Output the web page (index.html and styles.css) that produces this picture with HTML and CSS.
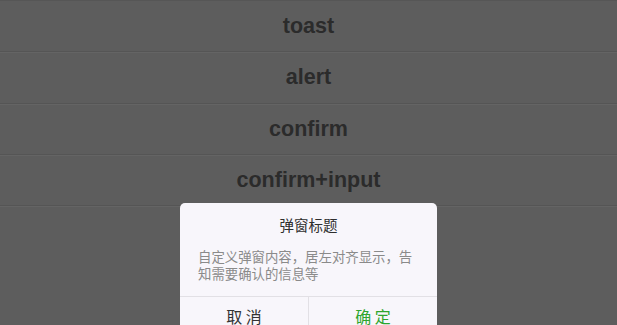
FILE: index.html
```html
<!DOCTYPE html>
<html lang="zh">
<head>
<meta charset="utf-8">
<title>Dialog demo</title>
<link rel="stylesheet" href="styles.css">
</head>
<body>
<ul class="menu">
  <li class="menu-item">toast</li>
  <li class="menu-item">alert</li>
  <li class="menu-item">confirm</li>
  <li class="menu-item">confirm+input</li>
</ul>
<div class="dialog">
  <div class="dialog-title">弹窗标题</div>
  <div class="dialog-content">自定义弹窗内容，居左对齐显示，告知需要确认的信息等</div>
  <div class="dialog-actions">
    <div class="dialog-btn">取 消</div>
    <div class="dialog-btn primary">确 定</div>
  </div>
</div>
</body>
</html>
```
FILE: styles.css
```css
html, body {
  margin: 0;
  padding: 0;
  height: 100%;
  overflow: hidden;
}
body {
  background: #5d5d5d;
  font-family: "Liberation Sans", Arial, sans-serif;
}
.menu {
  list-style: none;
  margin: 0;
  padding: 0;
  border-top: 1px solid #565656;
}
.menu-item {
  height: 50.3px;
  line-height: 50px;
  text-align: center;
  font-size: 21.5px;
  font-weight: bold;
  color: #2b2b2b;
  border-bottom: 1px solid #555555;
  box-shadow: 0 1px 0 #646464;
}
.dialog {
  position: absolute;
  left: 180px;
  top: 203px;
  width: 257px;
  background: #f8f6fb;
  border-radius: 5px;
  font-family: "Noto Sans CJK SC", "Liberation Sans", sans-serif;
}
.dialog-title {
  padding-top: 12px;
  line-height: 20px;
  font-size: 14.5px;
  color: #2e2e2e;
  text-align: center;
}
.dialog-content {
  padding: 13px 18px 15px 18px;
  font-size: 13.4px;
  line-height: 16.5px;
  color: #8a8a8a;
}
.dialog-actions {
  display: flex;
  border-top: 1px solid #e2e0e5;
}
.dialog-btn {
  flex: 1;
  height: 38px;
  line-height: 38px;
  text-align: center;
  font-size: 16px;
  color: #333333;
}
.dialog-btn + .dialog-btn {
  border-left: 1px solid #e2e0e5;
}
.dialog-btn.primary {
  color: #2ea52e;
}
```
